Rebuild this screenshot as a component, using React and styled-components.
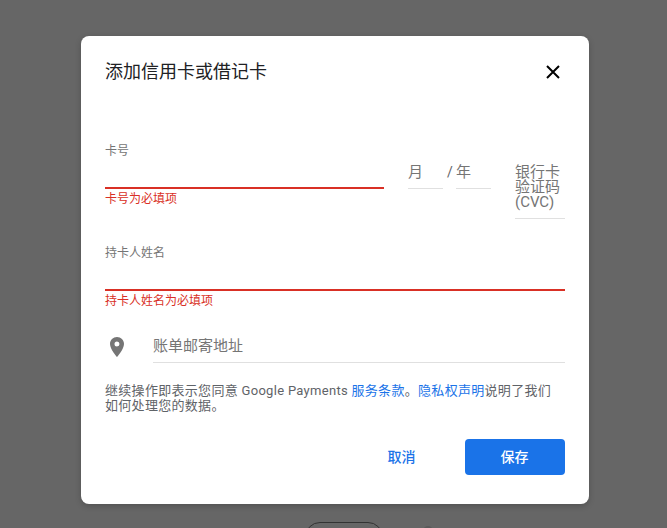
import React from 'react';
import styled, { createGlobalStyle } from 'styled-components';

const GlobalStyle = createGlobalStyle`
  html, body {
    margin: 0;
    padding: 0;
    height: 100%;
    overflow: hidden;
    background: #666;
  }
  * {
    box-sizing: border-box;
  }
  body {
    font-family: Roboto, "Noto Sans CJK SC", sans-serif;
  }
`;

const Backdrop = styled.div`
  height: 528px;
  padding: 36px 0 0 81px;
  overflow: hidden;
  background: #666;
`;

const Dialog = styled.div`
  width: 508px;
  height: 468px;
  padding: 24px 24px 0;
  background: #fff;
  border-radius: 8px;
  box-shadow: 0 2px 6px rgba(0, 0, 0, 0.2);
`;

const Header = styled.div`
  display: flex;
  align-items: center;
  justify-content: space-between;
  height: 24px;
`;

const Title = styled.h2`
  margin: 0;
  font-size: 18px;
  font-weight: 400;
  line-height: 24px;
  color: #202124;
`;

const CloseButton = styled.button`
  display: flex;
  padding: 0;
  margin-right: 5px;
  border: 0;
  background: none;
`;

const CardRow = styled.div`
  display: flex;
  align-items: flex-start;
  margin-top: 59px;
`;

const CardNumber = styled.div`
  width: 279px;
  margin-right: 24px;
`;

const FieldLabel = styled.div`
  height: 16px;
  font-size: 12px;
  line-height: 16px;
  color: #757575;
`;

const ErrorLine = styled.div`
  height: ${(p) => p.$height}px;
  border-bottom: 2px solid #d93025;
`;

const ErrorText = styled.div`
  margin-top: 2px;
  font-size: 12px;
  line-height: 16px;
  color: #d93025;
`;

const SmallField = styled.div`
  width: ${(p) => p.$width}px;
  padding-bottom: 8px;
  font-size: 15px;
  line-height: 16px;
  color: #757575;
  border-bottom: 1px solid #e0e0e0;
`;

const DateGroup = styled.div`
  display: flex;
  align-items: flex-start;
  margin-top: 21px;
`;

const Slash = styled.span`
  width: 13px;
  padding-left: 4px;
  font-size: 14px;
  line-height: 16px;
  color: #5f6368;
`;

const CvcField = styled.div`
  width: 50px;
  margin: 22px 0 0 24px;
  padding-bottom: 8px;
  font-size: 15px;
  line-height: 15px;
  color: #757575;
  border-bottom: 1px solid #e0e0e0;
`;

const CvcLine = styled.div`
  white-space: nowrap;
`;

const NameField = styled.div`
  margin-top: 26px;
`;

const AddressRow = styled.div`
  display: flex;
  align-items: center;
  margin-top: 22px;
`;

const PinBox = styled.div`
  display: flex;
  justify-content: center;
  width: 48px;
  padding-right: 24px;
`;

const AddressInput = styled.div`
  flex: 1;
  height: 32px;
  font-size: 15px;
  line-height: 30px;
  color: #757575;
  border-bottom: 1px solid #e0e0e0;
`;

const Terms = styled.div`
  margin-top: 20px;
  font-size: 13px;
  line-height: 15px;
  letter-spacing: 0.3px;
  color: #5f6368;
`;

const TermsLine = styled.div`
  white-space: nowrap;
`;

const TermsLink = styled.a`
  color: #1a73e8;
  text-decoration: none;
`;

const Actions = styled.div`
  display: flex;
  align-items: center;
  justify-content: flex-end;
  margin-top: 26px;
`;

const ActionButton = styled.button`
  width: 100px;
  height: 36px;
  padding: 0 1px 3px 0;
  border: 0;
  border-radius: 4px;
  font-family: inherit;
  font-size: 14px;
  font-weight: 500;
  color: ${(p) => (p.$primary ? '#fff' : '#1a73e8')};
  background: ${(p) => (p.$primary ? '#1a73e8' : 'transparent')};
  margin-left: ${(p) => (p.$primary ? '13px' : '0')};
`;

const BehindRow = styled.div`
  display: flex;
  align-items: flex-start;
  margin: 18px 0 0 224px;
`;

const BehindPill = styled.div`
  width: 78px;
  height: 30px;
  border: 1px solid #333;
  border-radius: 15px;
`;

const BehindDot = styled.div`
  width: 10px;
  height: 10px;
  margin: 4px 0 0 40px;
  border-radius: 50%;
  background: #5a5a5a;
`;

const App = () => {
  return (
    <>
      <GlobalStyle />
      <Backdrop>
        <Dialog>
          <Header>
            <Title>添加信用卡或借记卡</Title>
            <CloseButton aria-label="关闭">
              <svg width="14" height="14" viewBox="0 0 14 14">
                <path d="M1 1L13 13M13 1L1 13" stroke="#000" strokeWidth="2" fill="none" />
              </svg>
            </CloseButton>
          </Header>

          <CardRow>
            <CardNumber>
              <FieldLabel>卡号</FieldLabel>
              <ErrorLine $height={30} />
              <ErrorText>卡号为必填项</ErrorText>
            </CardNumber>
            <DateGroup>
              <SmallField $width={35}>月</SmallField>
              <Slash>/</Slash>
              <SmallField $width={35}>年</SmallField>
            </DateGroup>
            <CvcField>
              <CvcLine>银行卡</CvcLine>
              <CvcLine>验证码</CvcLine>
              <CvcLine>(CVC)</CvcLine>
            </CvcField>
          </CardRow>

          <NameField>
            <FieldLabel>持卡人姓名</FieldLabel>
            <ErrorLine $height={30} />
            <ErrorText>持卡人姓名为必填项</ErrorText>
          </NameField>

          <AddressRow>
            <PinBox>
              <svg width="14" height="20" viewBox="0 0 14 20">
                <path
                  fillRule="evenodd"
                  fill="#757575"
                  d="M7 0C3.13 0 0 3.13 0 7c0 5.25 7 13 7 13s7-7.75 7-13c0-3.87-3.13-7-7-7zm0 9.5a2.5 2.5 0 1 1 0-5 2.5 2.5 0 0 1 0 5z"
                />
              </svg>
            </PinBox>
            <AddressInput>账单邮寄地址</AddressInput>
          </AddressRow>

          <Terms>
            <TermsLine>
              继续操作即表示您同意 Google Payments <TermsLink>服务条款</TermsLink>。
              <TermsLink>隐私权声明</TermsLink>说明了我们
            </TermsLine>
            <TermsLine>如何处理您的数据。</TermsLine>
          </Terms>

          <Actions>
            <ActionButton>取消</ActionButton>
            <ActionButton $primary>保存</ActionButton>
          </Actions>
        </Dialog>
        <BehindRow>
          <BehindPill />
          <BehindDot />
        </BehindRow>
      </Backdrop>
    </>
  );
};

export default App;
